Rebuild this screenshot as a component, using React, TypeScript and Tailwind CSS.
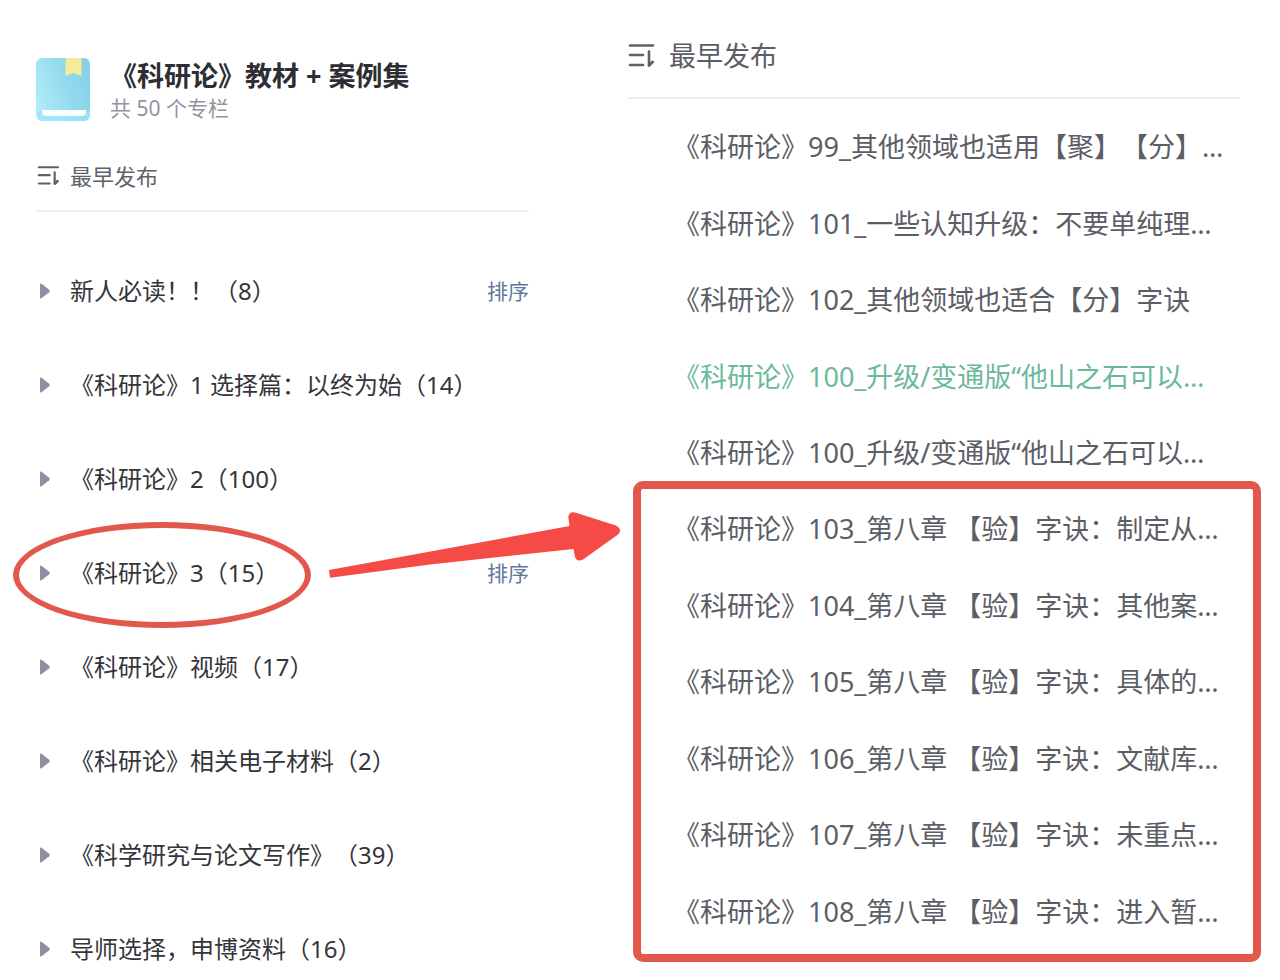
type Column = { title: string; sortable?: boolean; marked?: boolean };

const columns: Column[] = [
  { title: "新人必读！！（8）", sortable: true },
  { title: "《科研论》1 选择篇：以终为始（14）" },
  { title: "《科研论》2（100）" },
  { title: "《科研论》3（15）", sortable: true, marked: true },
  { title: "《科研论》视频（17）" },
  { title: "《科研论》相关电子材料（2）" },
  { title: "《科学研究与论文写作》（39）" },
  { title: "导师选择，申博资料（16）" },
];

type Article = { title: string; active?: boolean };

const earlier: Article[] = [
  { title: "《科研论》99_其他领域也适用【聚】【分】…" },
  { title: "《科研论》101_一些认知升级：不要单纯理…" },
  { title: "《科研论》102_其他领域也适合【分】字诀" },
  { title: "《科研论》100_升级/变通版“他山之石可以…", active: true },
  { title: "《科研论》100_升级/变通版“他山之石可以…" },
];

const highlighted: Article[] = [
  { title: "《科研论》103_第八章 【验】字诀：制定从…" },
  { title: "《科研论》104_第八章 【验】字诀：其他案…" },
  { title: "《科研论》105_第八章 【验】字诀：具体的…" },
  { title: "《科研论》106_第八章 【验】字诀：文献库…" },
  { title: "《科研论》107_第八章 【验】字诀：未重点…" },
  { title: "《科研论》108_第八章 【验】字诀：进入暂…" },
];

function BookIcon() {
  return (
    <svg className="h-16 w-[54px] shrink-0" viewBox="0 0 54 64" aria-hidden="true">
      <defs>
        <linearGradient id="cover" x1="0" y1="0.8" x2="1" y2="0.4">
          <stop offset="0" stopColor="#b4ecf9" />
          <stop offset="0.6" stopColor="#93daee" />
          <stop offset="1" stopColor="#87d2ea" />
        </linearGradient>
      </defs>
      <rect width="54" height="63" rx="6" fill="url(#cover)" />
      <path d="M1 52H54V57A6 6 0 0 1 48 63H6A6 6 0 0 1 1 57Z" fill="#a0e6fa" opacity="0.7" />
      <path d="M29.500 0H45.500V18L37.500 15L29.500 18Z" fill="#f5eb9c" />
      <path d="M6 52H50V54Q50 58 46 58H10Q6 58 6 54Z" fill="#fafeff" />
    </svg>
  );
}

function SortIcon({ className }: { className: string }) {
  return (
    <svg className={className} viewBox="0 0 28 24" fill="none" stroke="#5f6068" strokeWidth="2.6" strokeLinecap="round" aria-hidden="true">
      <path d="M3 1.500H26M3 11H16M3 21H16M22 7.500V20" />
      <path d="M22 21.300L25.500 18" strokeWidth="3" />
    </svg>
  );
}

function Pointer() {
  return (
    <svg className="pointer-events-none absolute -top-[43px] left-[293px] h-[70px] w-[293px]" viewBox="329 510 293 70" aria-hidden="true">
      <path
        d="M329 570L569.500 526L568.300 517Q569 511 575 512.500L616 525.500Q623 529.500 618 534.500L583 559.500Q577 562.500 575 557L573.500 549L430 564.500L330 577.700Z"
        fill="#f54a45"
      />
    </svg>
  );
}

function ArticleList({ items }: { items: Article[] }) {
  return (
    <>
      {items.map((item, i) => (
        <li key={i} className="flex items-center pl-[46px]">
          <a href="#" className={item.active ? "whitespace-nowrap text-[27px] leading-10 text-[#6cb89b]" : "whitespace-nowrap text-[27px] leading-10 text-[#5c5e66]"}>
            {item.title}
          </a>
        </li>
      ))}
    </>
  );
}

export default function App() {
  return (
    <main className="grid min-h-screen grid-cols-[493fr_613fr] gap-[98px] bg-white pl-9 pr-10 font-['Noto_Sans','Noto_Sans_CJK_SC',sans-serif] [text-spacing-trim:space-all]">
      <section className="pt-[58px]">
        <header className="flex gap-5">
          <BookIcon />
          <div>
            <h1 className="whitespace-nowrap text-[27px] font-bold leading-9 text-[#2d2e33]">《科研论》教材 + 案例集</h1>
            <p className="text-[21px] leading-7 text-[#9394a0]">共 50 个专栏</p>
          </div>
        </header>
        <div className="mt-9 flex h-[54px] items-start border-b-2 border-[#efeff1]">
          <button type="button" className="flex items-center gap-[10px] text-[22px] leading-9 text-[#606168]">
            <SortIcon className="h-5 w-6" />
            最早发布
          </button>
        </div>
        <ul className="mt-[59px] flex flex-col gap-[54px]">
          {columns.map((column) => (
            <li key={column.title} className="relative flex h-10 items-center justify-between">
              <button type="button" className="flex items-center gap-5 whitespace-nowrap pl-1 text-[24px] leading-10 text-[#34353b]">
                <svg className="h-4 w-[10px]" viewBox="0 0 10 16" fill="#8e8fa0" aria-hidden="true">
                  <path d="M0 1.500Q0 0 1.500 .8L9.200 6.800Q10.200 8 9.200 9.200L1.500 15.200Q0 16 0 14.500Z" />
                </svg>
                {column.title}
              </button>
              {column.sortable && (
                <button type="button" className="text-[21px] leading-10 text-[#60799b]">
                  排序
                </button>
              )}
              {column.marked && (
                <>
                  <span className="pointer-events-none absolute -left-[23px] -top-[31px] h-[106px] w-[298px] rounded-[50%] border-[6px] border-[#e2584d]" />
                  <Pointer />
                </>
              )}
            </li>
          ))}
        </ul>
      </section>

      <section className="flex flex-col pb-[30px] pt-9">
        <div className="flex h-[63px] items-start border-b-2 border-[#edeef2]">
          <button type="button" className="flex items-center gap-[14px] text-[27px] leading-10 text-[#5c5e66]">
            <SortIcon className="h-6 w-7" />
            最早发布
          </button>
        </div>
        <ul className="mt-[10px] grid flex-[5] auto-rows-fr">
          <ArticleList items={earlier} />
        </ul>
        <ul className="relative grid flex-[6] auto-rows-fr">
          <ArticleList items={highlighted} />
          <li aria-hidden="true" className="pointer-events-none absolute -bottom-3 -right-[21px] -top-[10px] left-[6px] rounded-[10px] border-8 border-[#e2584d]" />
        </ul>
      </section>
    </main>
  );
}
